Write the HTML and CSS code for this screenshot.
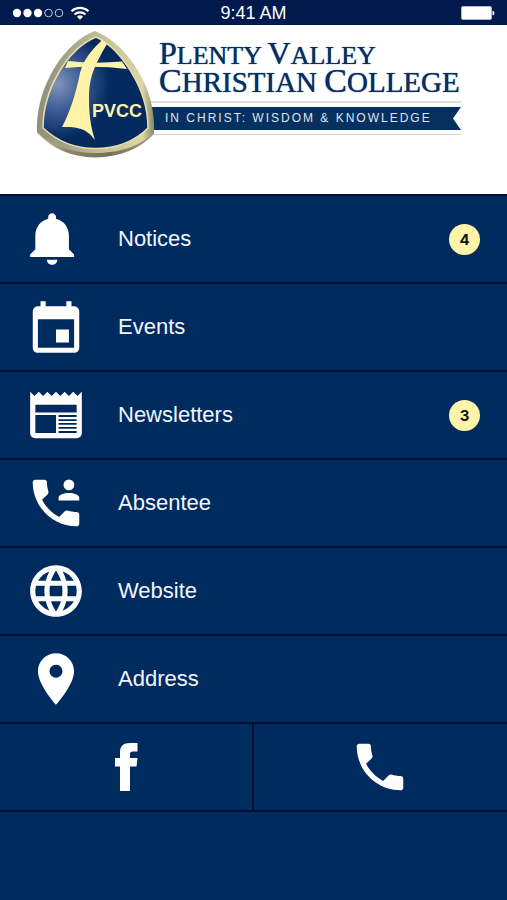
FILE: index.html
```html
<!DOCTYPE html>
<html lang="en">
<head>
<meta charset="utf-8">
<meta name="viewport" content="width=device-width, initial-scale=1">
<title>Plenty Valley Christian College</title>
<link rel="stylesheet" href="styles.css">
</head>
<body>
<div class="status">
  <svg class="signal" viewBox="0 0 78 14" aria-hidden="true">
    <g fill="#fff"><circle cx="5" cy="7" r="4.2"/><circle cx="15.500" cy="7" r="4.200"/><circle cx="26" cy="7" r="4.200"/></g>
    <g fill="none" stroke="#c3cbe0"><circle cx="36.500" cy="7" r="3.800"/><circle cx="47" cy="7" r="3.800"/></g>
    <g fill="none" stroke="#fff" stroke-width="2.200"><path d="M59.500 5.200a12.500 12.500 0 0 1 17 0"/><path d="M62.500 8.500a8 8 0 0 1 11 0"/></g>
    <path fill="#fff" d="M65 10.700a4.500 4.500 0 0 1 6 0L68 13.700z"/>
  </svg>
  <span class="time">9:41 AM</span>
  <svg class="battery" viewBox="0 0 34 14" aria-hidden="true">
    <rect x=".5" y=".5" width="30" height="13" rx="1.500" fill="#fff" stroke="#aeb7d0"/>
    <path fill="#fff" d="M31.500 4.500q2 .5 2 2.500t-2 2.500z"/>
  </svg>
</div>

<header class="brand">
  <svg class="emblem" viewBox="0 0 120 128" role="img" aria-label="PVCC">
    <defs>
      <linearGradient id="rim" x1="0" y1="0" x2="1" y2="0">
        <stop offset="0" stop-color="#8f8d78"/><stop offset=".3" stop-color="#a8a68e"/><stop offset=".6" stop-color="#c9c497"/><stop offset=".9" stop-color="#ddd6a4"/><stop offset="1" stop-color="#8a866a"/>
      </linearGradient>
      <radialGradient id="field" cx=".14" cy=".42" r=".5">
        <stop offset="0" stop-color="#7f95bd"/><stop offset=".5" stop-color="#3a5990"/><stop offset="1" stop-color="#03295f"/>
      </radialGradient>
      <linearGradient id="base" x1="0" y1="0" x2="1" y2="0">
        <stop offset="0" stop-color="#d8cf92"/><stop offset=".25" stop-color="#8d8869"/><stop offset=".6" stop-color="#747057"/><stop offset="1" stop-color="#a59f78"/>
      </linearGradient>
    </defs>
    <path fill="url(#base)" d="M1 103Q24 127 59 127.500 96 127 118 104V92H1z"/>
    <path fill="url(#rim)" d="M59 1C86 11 120 52 118 102 104 117 82 123 59 123 36 123 15 116 1 102-1 56 30 11 59 1z"/>
    <path fill="url(#field)" stroke="#e6dfaa" stroke-width="1.500" d="M60 7C84 18 112 58 112 98 98 112 80 118.500 59 118.500 39 118.500 21 111 7 98 7 60 31 19 60 7z"/>
    <path fill="#fff3a9" d="M66 10l5 4C58 36 53 48 53 68 53 86 55 98 59 110 50 98 42 97 26 97 34 82 40 63 44 43 48 28 57 19 66 10z"/>
    <path fill="#fff3a9" d="M32 31Q59 34 86 31.500L91 39Q60 35 29 38z"/>
    <text class="emblem-text" x="56" y="87">PVCC</text>
  </svg>
  <div class="wordmark">
    <h1 class="name">
      <span class="line line-a"><b>P</b>LENTY <b>V</b>ALLEY</span>
      <span class="line line-b"><b>C</b>HRISTIAN <b>C</b>OLLEGE</span>
    </h1>
    <div class="ribbon"><p class="motto">IN CHRIST: WISDOM &amp; KNOWLEDGE</p></div>
  </div>
</header>

<nav class="menu">
  <a class="row" href="#notices">
    <svg class="icon" viewBox="1 0 24 24" aria-hidden="true"><path d="M11.500 22c1.100 0 2-.9 2-2h-4c0 1.100.9 2 2 2zm6.500-6v-5.500c0-3.070-2.130-5.640-5-6.320V3.500c0-.83-.67-1.500-1.500-1.500S10 2.670 10 3.500v.68c-2.870.68-5 3.250-5 6.320V16l-2 2v1h17v-1l-2-2z"/></svg>
    <span class="label">Notices</span><span class="badge">4</span>
  </a>
  <a class="row" href="#events">
    <svg class="icon" viewBox="0 -1 24 24" aria-hidden="true"><path d="M17 12h-5v5h5v-5zM16 1v2H8V1H6v2H5c-1.110 0-1.990.9-1.990 2L3 19c0 1.100.89 2 2 2h14c1.100 0 2-.9 2-2V5c0-1.100-.9-2-2-2h-1V1h-2zm3 18H5V8h14v11z"/></svg>
    <span class="label">Events</span>
  </a>
  <a class="row" href="#newsletters">
    <svg class="icon" viewBox="0 0 24 24" aria-hidden="true"><path fill-rule="evenodd" d="M22 3l-1.670 1.670L18.670 3 17 4.670 15.330 3l-1.660 1.670L12 3l-1.670 1.670L8.670 3 7 4.670 5.330 3 3.670 4.670 2 3v16c0 1.100.9 2 2 2h16c1.100 0 2-.9 2-2V3zM4 8h16v3H4zM4 12h8v7H4zM13 12h7v.8h-7zM13 13.600h7v.7h-7zM13 15.100h7v.7h-7zM13 16.600h7v.7h-7zM13 18.200h7v.8h-7z"/></svg>
    <span class="label">Newsletters</span><span class="badge">3</span>
  </a>
  <a class="row" href="#absentee">
    <svg class="icon" viewBox="0 0 24 24" aria-hidden="true"><path d="M6.620 10.790c1.440 2.830 3.760 5.140 6.590 6.590l2.200-2.200c.27-.27.67-.36 1.020-.24 1.120.37 2.330.57 3.570.57.550 0 1 .45 1 1V20c0 .55-.45 1-1 1-9.390 0-17-7.610-17-17 0-.55.45-1 1-1h3.500c.55 0 1 .45 1 1 0 1.250.2 2.450.57 3.570.11.35.03.74-.25 1.020l-2.200 2.200z"/><circle cx="17" cy="5" r="2.100"/><path d="M13 11V10c0-2.500 8-2.500 8 0v1z"/></svg>
    <span class="label">Absentee</span>
  </a>
  <a class="row" href="#website">
    <svg class="icon" viewBox="0 0 24 24" aria-hidden="true"><path d="M11.990 2C6.470 2 2 6.480 2 12s4.470 10 9.990 10C17.520 22 22 17.520 22 12S17.520 2 11.990 2zm6.930 6h-2.950c-.32-1.250-.78-2.450-1.380-3.560 1.840.63 3.370 1.910 4.330 3.560zM12 4.040c.83 1.200 1.480 2.530 1.910 3.960h-3.820c.43-1.430 1.080-2.760 1.910-3.960zM4.260 14C4.100 13.360 4 12.690 4 12s.1-1.360.26-2h3.380c-.08.66-.14 1.320-.14 2s.06 1.340.14 2H4.260zm.82 2h2.950c.32 1.250.78 2.450 1.380 3.560-1.840-.63-3.370-1.900-4.330-3.560zm2.950-8H5.080c.96-1.660 2.490-2.930 4.330-3.560C8.810 5.550 8.350 6.750 8.030 8zM12 19.960c-.83-1.200-1.480-2.530-1.910-3.960h3.820c-.43 1.430-1.080 2.760-1.910 3.960zM14.340 14H9.660c-.09-.66-.16-1.320-.16-2s.07-1.350.16-2h4.680c.09.65.16 1.320.16 2s-.07 1.340-.16 2zm.25 5.560c.6-1.110 1.060-2.310 1.380-3.560h2.950c-.96 1.650-2.490 2.930-4.330 3.560zM16.360 14c.08-.66.14-1.320.14-2s-.06-1.340-.14-2h3.380c.16.64.26 1.310.26 2s-.1 1.360-.26 2h-3.380z"/></svg>
    <span class="label">Website</span>
  </a>
  <a class="row" href="#address">
    <svg class="icon" viewBox="0 0 24 24" aria-hidden="true"><path d="M12 2C8.130 2 5 5.130 5 9c0 5.250 7 13 7 13s7-7.750 7-13c0-3.870-3.130-7-7-7zm0 9.500c-1.380 0-2.500-1.120-2.500-2.500s1.120-2.500 2.500-2.500 2.500 1.120 2.500 2.500-1.120 2.500-2.500 2.500z"/></svg>
    <span class="label">Address</span>
  </a>
  <div class="contacts">
    <a class="contact" href="#facebook" aria-label="Facebook">
      <svg class="icon" viewBox="0 0 62 62" aria-hidden="true"><path d="M25 55V30.500H20V22h5v-5.500C25 10 28.500 7 35 7h7.500v8.500H38c-2.500 0-3 1-3 3V22h7.500l-1 8.500H35V55z"/></svg>
    </a>
    <a class="contact" href="#phone" aria-label="Phone">
      <svg class="icon" viewBox="0 0 24 24" aria-hidden="true"><path d="M6.620 10.790c1.440 2.830 3.760 5.140 6.590 6.590l2.200-2.200c.27-.27.67-.36 1.020-.24 1.120.37 2.330.57 3.570.57.550 0 1 .45 1 1V20c0 .55-.45 1-1 1-9.390 0-17-7.610-17-17 0-.55.45-1 1-1h3.500c.55 0 1 .45 1 1 0 1.250.2 2.450.57 3.570.11.35.03.74-.25 1.020l-2.200 2.200z"/></svg>
    </a>
  </div>
</nav>
</body>
</html>
```
FILE: styles.css
```css
* { box-sizing: border-box; }

body {
  margin: 0;
  min-height: 100vh;
  background: #002b5f;
  color: #fff;
  font-family: "Liberation Sans", Arial, sans-serif;
}

.status {
  display: grid;
  grid-template-columns: 1fr auto 1fr;
  align-items: center;
  height: 25px;
  padding: 0 12px;
  background: #001a4d;
}
.signal { width: 78px; height: 14px; }
.time { font-size: 18px; line-height: 24px; padding-top: 1px; }
.battery { width: 34px; height: 14px; justify-self: end; }

.brand {
  display: flex;
  height: 169px;
  padding: 5px 36px;
  background: #fff;
  color: #06305f;
}
.emblem {
  position: relative;
  z-index: 1;
  flex: none;
  width: 120px;
  height: 128px;
}
.emblem-text {
  fill: #fff3a9;
  font-family: "Liberation Sans", Arial, sans-serif;
  font-size: 18px;
  font-weight: 700;
}
.wordmark { flex: 0 1 305px; padding: 13px 0 0 3px; }
.name {
  margin: 0;
  font-family: "Liberation Serif", "Times New Roman", serif;
  font-weight: 400;
  white-space: nowrap;
  text-shadow: 0 0 1px #06305f;
}
.line { display: block; line-height: 26px; }
.line b { font-weight: 400; line-height: 1px; }
.line-a { font-size: 26px; }
.line-a b { font-size: 32px; }
.line-b { font-size: 29px; }
.line-b b { font-size: 34px; }

.ribbon {
  margin: 6px 0 0 -8px;
  padding: 4px 0;
  border-top: 2px solid #dcdee2;
  border-bottom: 1px solid #cfd6e2;
}
.motto {
  margin: 0;
  padding-left: 14px;
  background: #06305f;
  clip-path: polygon(0 0, 100% 0, calc(100% - 8px) 50%, 100% 100%, 0 100%);
  color: #dfe6f0;
  font-size: 12px;
  line-height: 23px;
  letter-spacing: 2px;
  white-space: nowrap;
}

.menu { border-top: 2px solid #020c2c; }
.row {
  display: flex;
  align-items: center;
  gap: 31px;
  height: 88px;
  padding: 0 27px 0 25px;
  border-bottom: 2px solid #020c2c;
  color: #f2f6fc;
  text-decoration: none;
}
.icon {
  flex: none;
  width: 62px;
  height: 62px;
  fill: #fff;
}
.label {
  flex: 1;
  font-size: 22px;
  font-weight: 300;
}
.badge {
  width: 31px;
  border-radius: 50%;
  background: #fff3a9;
  color: #141420;
  font-family: Inter, sans-serif;
  font-size: 15px;
  font-weight: 700;
  line-height: 31px;
  text-align: center;
}
.contacts {
  display: grid;
  grid-template-columns: 1fr 1fr;
  height: 88px;
  border-bottom: 2px solid #020c2c;
}
.contact {
  display: flex;
  align-items: center;
  justify-content: center;
}
.contact:first-child { border-right: 2px solid #020c2c; }
```
